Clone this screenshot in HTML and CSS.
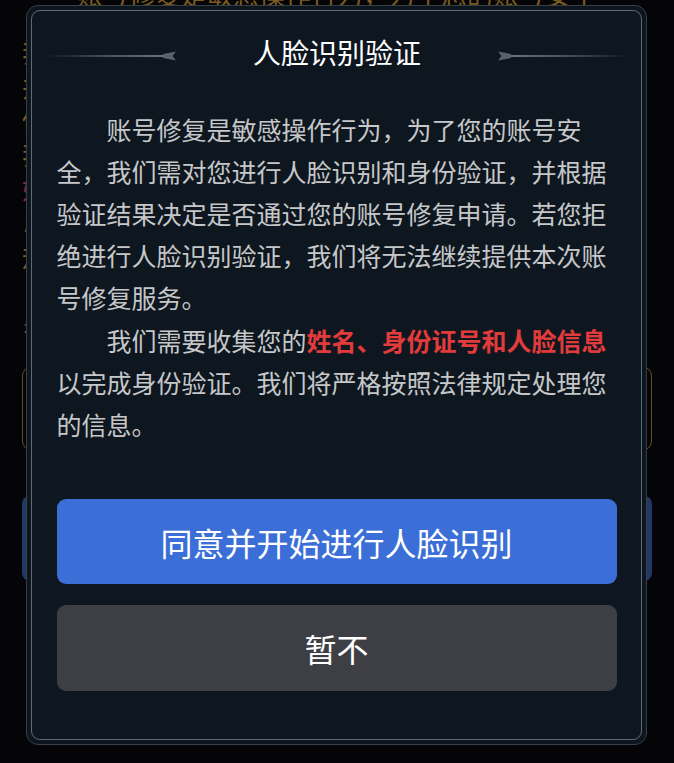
FILE: index.html
```html
<!DOCTYPE html>
<html lang="zh-CN">
<head>
<meta charset="utf-8">
<title>人脸识别验证</title>
<link rel="stylesheet" href="styles.css">
</head>
<body>
<div class="page">
  <div class="bg-title">账号修复是敏感操作行为，为了您的账号安全</div>
  <div class="bg-text">
    <p>我们需对您进行人脸识别和身份验证</p>
    <p>并根据验证结果决定是否通过您的账号</p>
    <p>修复申请。若您拒绝进行人脸识别验证</p>
    <p>我们将无法继续提供本次账号修复服务</p>
    <p class="bg-red">姓名、身份证号和人脸信息</p>
    <p>以完成身份验证。我们将严格按照法律</p>
    <p>规定处理您的信息。</p>
  </div>
  <div class="bg-close">×</div>
  <div class="bg-box"></div>
  <div class="bg-btn"></div>
</div>

<div class="dialog">
  <div class="dialog-inner">
    <div class="header">
      <svg class="deco" width="131" height="12" viewBox="0 0 131 12">
        <defs>
          <linearGradient id="gl" x1="0" x2="1" y1="0" y2="0">
            <stop offset="0" stop-color="#5d6a75" stop-opacity="0"/>
            <stop offset="0.5" stop-color="#5d6a75" stop-opacity="0.7"/>
            <stop offset="1" stop-color="#6b7883"/>
          </linearGradient>
        </defs>
        <rect x="0" y="5" width="122" height="2" fill="url(#gl)"/>
        <path d="M117 4 L130 1.5 L126.5 6 L130 10.5 L117 8 Z" fill="#56636e"/>
      </svg>
      <h1 class="title">人脸识别验证</h1>
      <svg class="deco flip" width="131" height="12" viewBox="0 0 131 12">
        <defs>
          <linearGradient id="gr" x1="0" x2="1" y1="0" y2="0">
            <stop offset="0" stop-color="#5d6a75" stop-opacity="0"/>
            <stop offset="0.5" stop-color="#5d6a75" stop-opacity="0.7"/>
            <stop offset="1" stop-color="#6b7883"/>
          </linearGradient>
        </defs>
        <rect x="0" y="5" width="122" height="2" fill="url(#gr)"/>
        <path d="M117 4 L130 1.5 L126.5 6 L130 10.5 L117 8 Z" fill="#56636e"/>
      </svg>
    </div>
    <div class="body">
      <p>账号修复是敏感操作行为，为了您的账号安全，我们需对您进行人脸识别和身份验证，并根据验证结果决定是否通过您的账号修复申请。若您拒绝进行人脸识别验证，我们将无法继续提供本次账号修复服务。</p>
      <p class="p2">我们需要收集您的<strong class="hl">姓名、身份证号和人脸信息</strong>以完成身份验证。我们将严格按照法律规定处理您的信息。</p>
    </div>
    <div class="actions">
      <button class="btn btn-primary">同意并开始进行人脸识别</button>
      <button class="btn btn-secondary">暂不</button>
    </div>
  </div>
</div>
</body>
</html>
```

FILE: styles.css
```css
html, body {
  margin: 0;
  padding: 0;
  background: #050507;
}

body {
  width: 674px;
  height: 763px;
  overflow: hidden;
  position: relative;
  font-family: "Noto Sans CJK SC", "Noto Sans", sans-serif;
}

/* ---------- background page (dimmed, behind modal) ---------- */
.page {
  padding: 0 22px;
  height: 763px;
  box-sizing: border-box;
}

.bg-title {
  margin: -21px 0 0;
  font-size: 26px;
  line-height: 30px;
  text-align: center;
  color: #7a5c20;
  white-space: nowrap;
}

.bg-text {
  margin-top: 26px;
  font-size: 26px;
  line-height: 34px;
  color: #7e6024;
}

.bg-text p {
  margin: 0;
  white-space: nowrap;
  overflow: hidden;
}

.bg-text .bg-red {
  color: #8a2a3a;
}

.bg-close {
  margin-top: 44px;
  height: 20px;
  font-size: 14px;
  line-height: 20px;
  color: #777;
}

.bg-box {
  margin-top: 29px;
  height: 85px;
  box-sizing: border-box;
  border: 1px solid #6a4e1c;
  border-radius: 10px;
}

.bg-btn {
  margin-top: 45px;
  height: 85px;
  border-radius: 8px;
  background: #213868;
}

/* ---------- modal ---------- */
.dialog {
  position: absolute;
  left: 26px;
  top: 5px;
  width: 621px;
  height: 740px;
  box-sizing: border-box;
  padding: 4px;
  border: 1px solid #35404a;
  border-radius: 12px;
  background: #0d151d;
}

.dialog-inner {
  height: 100%;
  box-sizing: border-box;
  border: 1.5px solid #5e6c77;
  border-radius: 9px;
  background: #0e1720;
  padding: 21px 23.5px 0 24.5px;
  display: flex;
  flex-direction: column;
}

.header {
  height: 40px;
  display: flex;
  align-items: center;
  justify-content: center;
  gap: 76px;
}

.deco {
  display: block;
  flex: none;
  margin-top: 8px;
}

.deco.flip {
  transform: scaleX(-1);
}

.title {
  margin: 0;
  font-size: 28px;
  line-height: 40px;
  font-weight: 400;
  color: #ffffff;
  white-space: nowrap;
}

.body {
  margin-top: 36px;
  font-size: 25px;
  line-height: 42px;
  color: #c6c7c9;
}

.body p {
  margin: 0;
  text-indent: 2em;
  text-align: left;
}

.body .p2 {
  margin-top: 1px;
}

.hl {
  color: #e23b3b;
  font-weight: 700;
}

.actions {
  margin-top: 54px;
  display: flex;
  flex-direction: column;
  gap: 21px;
}

.btn {
  display: block;
  width: 560px;
  border: none;
  border-radius: 9px;
  font-family: "Noto Sans CJK SC", "Noto Sans", sans-serif;
  font-size: 32px;
  font-weight: 400;
  color: #ffffff;
  padding: 0;
  cursor: pointer;
}

.btn-primary {
  height: 85px;
  background: #3b6fd7;
}

.btn-secondary {
  height: 86px;
  background: #3e3f45;
}
```
